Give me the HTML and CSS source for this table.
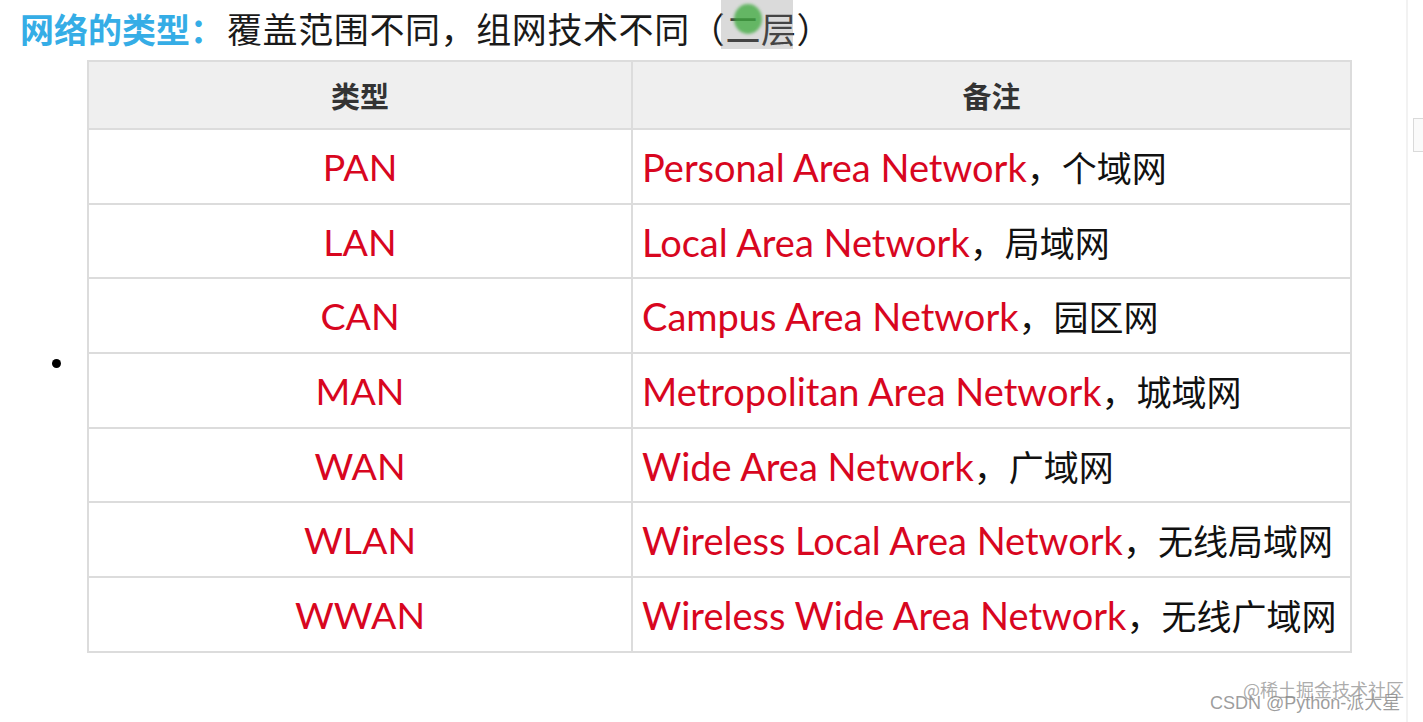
FILE: index.html
```html
<!DOCTYPE html>
<html lang="zh-CN">
<head>
<meta charset="utf-8">
<title>网络的类型</title>
<link rel="stylesheet" href="styles.css">
</head>
<body>
<div class="page">
  <h1 class="heading"><span class="heading-key">网络的类型：</span><span class="heading-text">覆盖范围不同，组网技术不同（<span class="mark">二层</span>）</span></h1>
  <div class="item">
    <span class="bullet"></span>
    <table class="net-table">
      <thead>
        <tr><th class="col-type">类型</th><th class="col-note">备注</th></tr>
      </thead>
      <tbody>
        <tr><td class="type">PAN</td><td class="note"><span class="en">Personal Area Network</span>，个域网</td></tr>
        <tr><td class="type">LAN</td><td class="note"><span class="en">Local Area Network</span>，局域网</td></tr>
        <tr><td class="type">CAN</td><td class="note"><span class="en">Campus Area Network</span>，园区网</td></tr>
        <tr><td class="type">MAN</td><td class="note"><span class="en">Metropolitan Area Network</span>，城域网</td></tr>
        <tr><td class="type">WAN</td><td class="note"><span class="en">Wide Area Network</span>，广域网</td></tr>
        <tr><td class="type">WLAN</td><td class="note"><span class="en">Wireless Local Area Network</span>，无线局域网</td></tr>
        <tr><td class="type">WWAN</td><td class="note"><span class="en">Wireless Wide Area Network</span>，无线广域网</td></tr>
      </tbody>
    </table>
  </div>
  <div class="scroll-line"></div>
  <div class="scroll-box"></div>
  <div class="watermark">
    <span class="wm-juejin">@稀土掘金技术社区</span>
    <span class="wm-csdn">CSDN @Python-派大星</span>
  </div>
</div>
</body>
</html>
```
FILE: styles.css
```css
html, body {
  margin: 0;
  padding: 0;
  background: #ffffff;
}
.page {
  position: relative;
  width: 1423px;
  height: 722px;
  overflow: hidden;
  font-family: "Noto Sans CJK SC", sans-serif;
}
.heading {
  margin: 0;
  padding: 6px 0 0 20px;
  height: 55px;
  box-sizing: border-box;
  font-size: 34px;
  line-height: 44px;
  font-weight: normal;
  white-space: nowrap;
}
.heading-key {
  color: #35ade6;
  font-weight: bold;
}
.heading-text {
  color: #1a1a1a;
  font-size: 35px;
  letter-spacing: 0.6px;
  margin-left: 3px;
}
.mark {
  position: relative;
}
.mark::before {
  content: "";
  position: absolute;
  left: -4px;
  top: -6px;
  width: 72px;
  height: 53px;
  background: rgba(150, 150, 150, 0.35);
}
.mark::after {
  content: "";
  position: absolute;
  left: 9px;
  top: 2px;
  width: 28px;
  height: 30px;
  border-radius: 50%;
  background: rgba(60, 170, 60, 0.75);
  filter: blur(1.5px);
}
.item {
  display: flex;
  align-items: center;
  margin-top: 5px;
}
.bullet {
  width: 9px;
  height: 9px;
  border-radius: 50%;
  background: #000;
  margin-left: 52px;
  margin-right: 26px;
  position: relative;
  top: 7px;
}
.net-table {
  width: 1265px;
  border-collapse: collapse;
  table-layout: fixed;
}
.net-table th,
.net-table td {
  border: 2px solid #dcdcdc;
  padding: 0;
}
.net-table th {
  height: 66px;
  background: #efefef;
  color: #333;
  font-size: 29px;
  font-weight: bold;
  text-align: center;
}
.col-type {
  width: 542px;
}
.net-table td {
  height: 72.7px;
  font-size: 35px;
  color: #111;
}
.type {
  text-align: center;
  color: #d8061f !important;
  font-family: "Lato", "Noto Sans CJK SC", sans-serif;
  font-size: 37.5px !important;
}
.note {
  padding-left: 9px !important;
  white-space: nowrap;
}
.en {
  color: #d8061f;
  font-family: "Lato", sans-serif;
  font-size: 38px;
}
.scroll-line {
  position: absolute;
  left: 1406px;
  top: 0;
  width: 2px;
  height: 722px;
  background: #f2f2f2;
}
.scroll-box {
  position: absolute;
  left: 1413px;
  top: 118px;
  width: 12px;
  height: 34px;
  border: 1px solid #dadada;
  border-right: none;
  box-sizing: border-box;
  background: #fafafa;
}
.watermark {
  position: absolute;
  left: 1208px;
  top: 676px;
  width: 200px;
  height: 40px;
  font-size: 18px;
  white-space: nowrap;
}
.wm-juejin {
  position: absolute;
  left: 35px;
  top: 0;
  color: rgba(150, 150, 150, 0.8);
  font-family: "Noto Sans CJK SC", sans-serif;
}
.wm-csdn {
  position: absolute;
  left: 2px;
  top: 12px;
  color: rgba(140, 140, 140, 0.85);
  font-family: "Liberation Sans", "Noto Sans CJK SC", sans-serif;
}
```
